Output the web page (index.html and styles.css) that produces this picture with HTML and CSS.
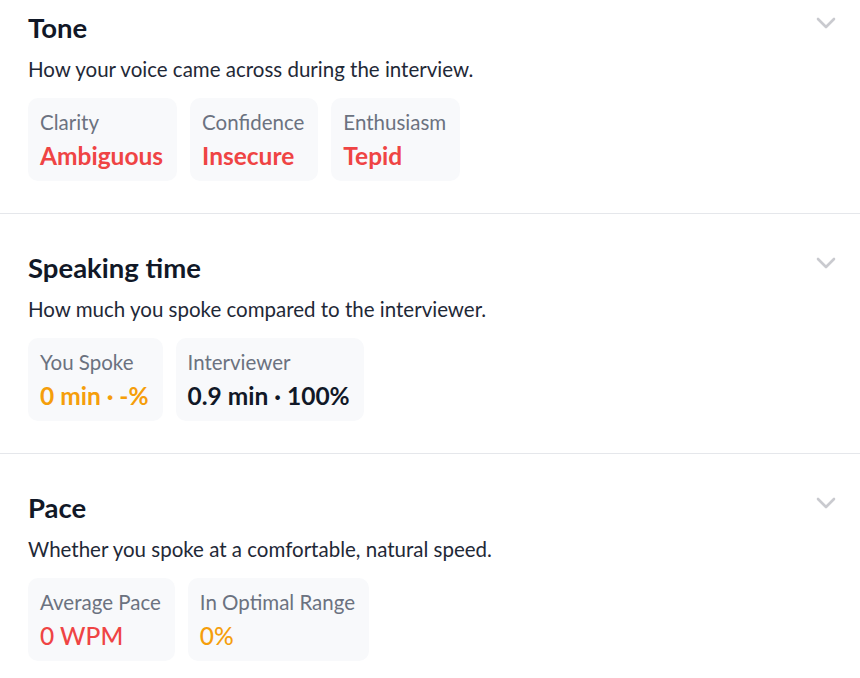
FILE: index.html
```html
<!DOCTYPE html>
<html lang="en">
<head>
    <meta charset="UTF-8">
    <meta name="viewport" content="width=device-width, initial-scale=1.0">
    <title>Interview Feedback - Delivery</title>
    <link rel="stylesheet" href="styles.css">
</head>
<body>
    <div class="panel">
        <div class="section">
            <div class="section-head">
                <h2>Tone</h2>
                <svg class="chevron" width="20" height="12" viewBox="0 0 20 12"><path d="M2 2 L10 10 L18 2"/></svg>
            </div>
            <p class="subtitle">How your voice came across during the interview.</p>
            <div class="stats">
                <div class="stat">
                    <div class="label">Clarity</div>
                    <div class="value bad">Ambiguous</div>
                </div>
                <div class="stat">
                    <div class="label">Confidence</div>
                    <div class="value bad">Insecure</div>
                </div>
                <div class="stat">
                    <div class="label">Enthusiasm</div>
                    <div class="value bad">Tepid</div>
                </div>
            </div>
        </div>

        <div class="section">
            <div class="section-head">
                <h2>Speaking time</h2>
                <svg class="chevron" width="20" height="12" viewBox="0 0 20 12"><path d="M2 2 L10 10 L18 2"/></svg>
            </div>
            <p class="subtitle">How much you spoke compared to the interviewer.</p>
            <div class="stats">
                <div class="stat">
                    <div class="label">You Spoke</div>
                    <div class="value warn">0 min · -%</div>
                </div>
                <div class="stat">
                    <div class="label">Interviewer</div>
                    <div class="value">0.9 min · 100%</div>
                </div>
            </div>
        </div>

        <div class="section">
            <div class="section-head">
                <h2>Pace</h2>
                <svg class="chevron" width="20" height="12" viewBox="0 0 20 12"><path d="M2 2 L10 10 L18 2"/></svg>
            </div>
            <p class="subtitle">Whether you spoke at a comfortable, natural speed.</p>
            <div class="stats">
                <div class="stat">
                    <div class="label">Average Pace</div>
                    <div class="value bad light">0 WPM</div>
                </div>
                <div class="stat">
                    <div class="label">In Optimal Range</div>
                    <div class="value warn light">0%</div>
                </div>
            </div>
        </div>
    </div>
</body>
</html>
```

FILE: styles.css
```css
body {
    margin: 0;
    font-family: Lato, 'Noto Sans', sans-serif;
    background: #fff;
    color: #111827;
}
.panel {
    margin-top: -26px;
}
.section {
    padding: 37px 24px 32px 28px;
    border-bottom: 1px solid #e5e7eb;
}
.section-head {
    display: flex;
    justify-content: space-between;
    align-items: flex-start;
}
h2 {
    margin: 0;
    font-size: 27.5px;
    line-height: 34px;
    font-weight: 700;
    color: #111827;
}
.chevron {
    margin-top: 6px;
    fill: none;
    stroke: #c9cacf;
    stroke-width: 2.6;
    stroke-linecap: round;
    stroke-linejoin: round;
}
.subtitle {
    margin: 10px 0 15px;
    font-size: 20.5px;
    line-height: 28px;
    color: #1f2937;
}
.stats {
    display: flex;
    gap: 13px;
}
.stat {
    background: #f8f9fb;
    border-radius: 10px;
    padding: 10px 14px 11px 12px;
}
.label {
    font-size: 20.5px;
    line-height: 28px;
    color: #6b7280;
}
.value {
    margin-top: 6px;
    font-size: 24.5px;
    line-height: 28px;
    font-weight: 700;
    color: #111827;
}
.value.bad {
    color: #ef4444;
}
.value.warn {
    color: #f59e0b;
}
.value.light {
    font-weight: 500;
}
```
